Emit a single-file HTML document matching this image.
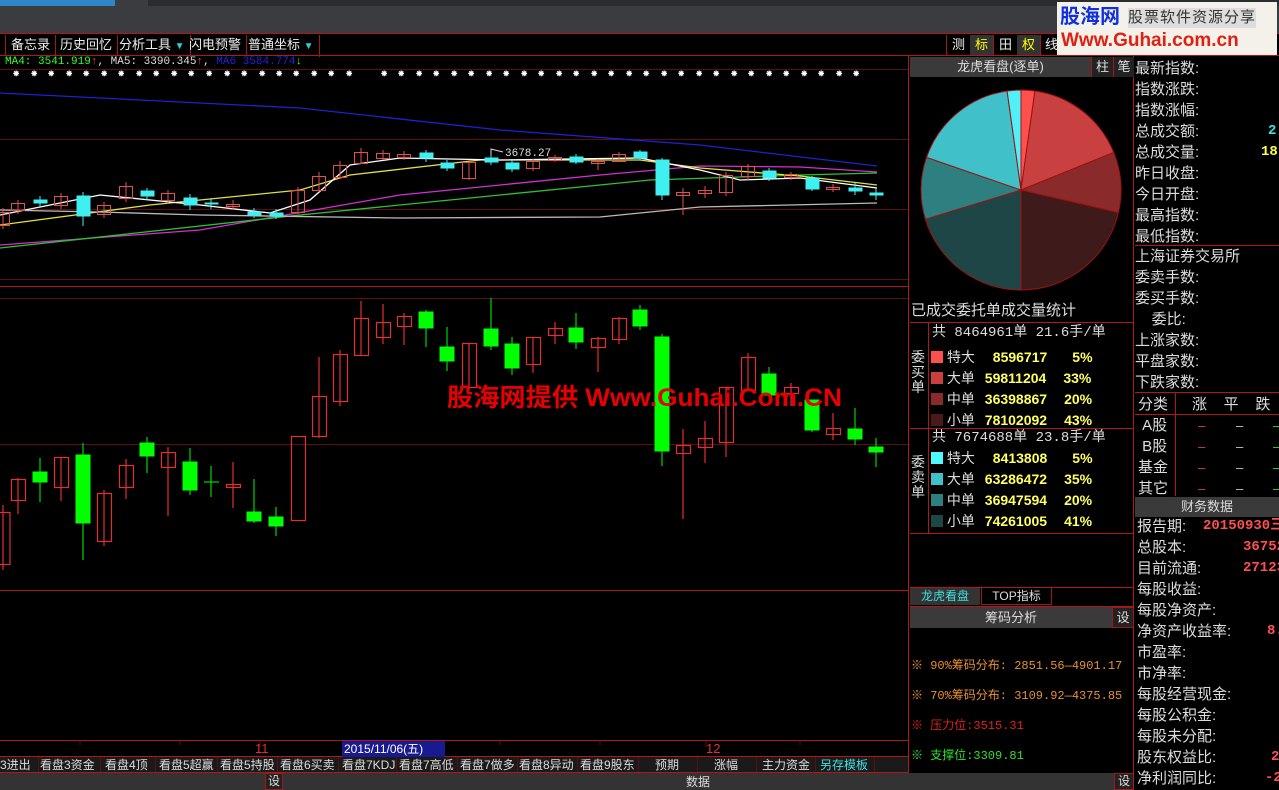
<!DOCTYPE html>
<html><head><meta charset="utf-8"><style>
*{margin:0;padding:0;box-sizing:border-box}
body{width:1279px;height:790px;background:#000;position:relative;overflow:hidden;font-family:"Liberation Sans","Noto Sans CJK SC",sans-serif;color:#ddd}
.a{position:absolute;white-space:nowrap}
.r{font-size:15px;color:#ddd;line-height:18px}
.tb{font-size:13px;color:#eee;line-height:20px;top:35px;border-right:1px solid #a01818;padding:0 5px}
.bt{font-size:12px;color:#ddd;top:757px;line-height:16px}
.m{font-family:"Liberation Mono","Noto Sans CJK SC",monospace}
</style></head><body>
<div class="a" style="left:0;top:0;width:1279px;height:33px;background:#3a3c40"></div>
<div class="a" style="left:0;top:0;width:115px;height:6px;background:#2e86c8"></div>
<div class="a" style="left:148px;top:0;width:1131px;height:6px;background:#2a2c30"></div>
<div class="a" style="left:0;top:33px;width:1279px;height:1px;background:#b01818"></div>
<div class="a" style="left:0;top:55px;width:1279px;height:1px;background:#b01818"></div>
<div class="a" style="left:5px;top:35px;height:20px;border-left:1px solid #a01818"></div>
<div class="a tb" style="left:6px">备忘录</div>
<div class="a tb" style="left:55px">历史回忆</div>
<div class="a tb" style="left:114px">分析工具 <span style="color:#30d0d0;font-size:10px">▼</span></div>
<div class="a tb" style="left:184px">闪电预警</div>
<div class="a tb" style="left:243px">普通坐标 <span style="color:#30d0d0;font-size:10px">▼</span></div>
<div class="a" style="left:946px;top:35px;height:20px;border-left:1px solid #a01818"></div>
<div class="a tb" style="left:947px">测</div>
<div class="a tb" style="left:970px;background:#333;color:#ff0">标</div>
<div class="a tb" style="left:994px">田</div>
<div class="a tb" style="left:1017px;background:#333;color:#ff0">权</div>
<div class="a tb" style="left:1040px">线</div>
<div class="a" style="left:1057px;top:2px;width:220px;height:53px;background:#f4f1ea"></div>
<div class="a" style="left:1060px;top:5px;font-size:20px;font-weight:bold;color:#1030e0;line-height:24px">股海网</div>
<div class="a" style="left:1128px;top:8px;font-size:15px;color:#333;line-height:20px;background:#ddd;letter-spacing:1px">股票软件资源分享</div>
<div class="a" style="left:1061px;top:30px;font-size:19px;font-weight:bold;color:#e02010;line-height:22px">Www.Guhai.com.cn</div>
<div class="a m" style="left:5px;top:56px;font-size:11px;line-height:13px"><span style="color:#30ff30">MA4: 3541.919</span><span style="color:#ff4040">↑</span><span style="color:#ddd">, MA5: 3390.345</span><span style="color:#ff4040">↑</span><span style="color:#ddd">, </span><span style="color:#2020e0">MA6  3584.774</span><span style="color:#30ff30">↓</span></div>
<svg class="a" style="left:0;top:0" width="909" height="773">
<g stroke="#5a1010" stroke-width="1">
<line x1="0" y1="69.5" x2="908" y2="69.5"/><line x1="0" y1="139.5" x2="908" y2="139.5"/><line x1="0" y1="209.5" x2="908" y2="209.5"/><line x1="0" y1="279.5" x2="908" y2="279.5"/>
<line x1="0" y1="298.5" x2="908" y2="298.5"/><line x1="0" y1="444.5" x2="908" y2="444.5"/>
</g>
<g stroke="#b01818"><line x1="0" y1="286.5" x2="908" y2="286.5"/><line x1="0" y1="590.5" x2="908" y2="590.5"/><line x1="0" y1="740.5" x2="908" y2="740.5"/><line x1="908.5" y1="56" x2="908.5" y2="773"/><line x1="0" y1="756.5" x2="908" y2="756.5"/><line x1="0" y1="772.5" x2="908" y2="772.5"/></g>
<g stroke="#5a1010"><line x1="260" y1="741" x2="260" y2="747"/><line x1="706" y1="741" x2="706" y2="747"/><line x1="80" y1="741" x2="80" y2="745"/><line x1="180" y1="741" x2="180" y2="745"/><line x1="500" y1="741" x2="500" y2="745"/><line x1="600" y1="741" x2="600" y2="745"/><line x1="800" y1="741" x2="800" y2="745"/></g>
<g stroke="#5a1010"><line x1="38.5" y1="757" x2="38.5" y2="772"/><line x1="100.5" y1="757" x2="100.5" y2="772"/><line x1="155.5" y1="757" x2="155.5" y2="772"/><line x1="217.5" y1="757" x2="217.5" y2="772"/><line x1="277.5" y1="757" x2="277.5" y2="772"/><line x1="338.5" y1="757" x2="338.5" y2="772"/><line x1="396.5" y1="757" x2="396.5" y2="772"/><line x1="457.5" y1="757" x2="457.5" y2="772"/><line x1="517.5" y1="757" x2="517.5" y2="772"/><line x1="577.5" y1="757" x2="577.5" y2="772"/><line x1="638.5" y1="757" x2="638.5" y2="772"/><line x1="697.5" y1="757" x2="697.5" y2="772"/><line x1="756.5" y1="757" x2="756.5" y2="772"/><line x1="815.5" y1="757" x2="815.5" y2="772"/><line x1="874.5" y1="757" x2="874.5" y2="772"/></g>
<g fill="#fff" font-size="10" font-family="Liberation Sans" font-weight="bold">
<text x="12" y="77">⁕</text><text x="30" y="77">⁕</text><text x="47" y="77">⁕</text><text x="65" y="77">⁕</text><text x="82" y="77">⁕</text><text x="100" y="77">⁕</text><text x="117" y="77">⁕</text><text x="135" y="77">⁕</text><text x="152" y="77">⁕</text><text x="170" y="77">⁕</text><text x="187" y="77">⁕</text><text x="205" y="77">⁕</text><text x="223" y="77">⁕</text><text x="240" y="77">⁕</text><text x="258" y="77">⁕</text><text x="275" y="77">⁕</text><text x="292" y="77">⁕</text><text x="310" y="77">⁕</text><text x="327" y="77">⁕</text><text x="345" y="77">⁕</text><text x="380" y="77">⁕</text><text x="397" y="77">⁕</text><text x="415" y="77">⁕</text><text x="432" y="77">⁕</text><text x="450" y="77">⁕</text><text x="467" y="77">⁕</text><text x="485" y="77">⁕</text><text x="502" y="77">⁕</text><text x="520" y="77">⁕</text><text x="537" y="77">⁕</text><text x="555" y="77">⁕</text><text x="572" y="77">⁕</text><text x="590" y="77">⁕</text><text x="607" y="77">⁕</text><text x="625" y="77">⁕</text><text x="642" y="77">⁕</text><text x="660" y="77">⁕</text><text x="677" y="77">⁕</text><text x="695" y="77">⁕</text><text x="712" y="77">⁕</text><text x="730" y="77">⁕</text><text x="747" y="77">⁕</text><text x="765" y="77">⁕</text><text x="782" y="77">⁕</text><text x="800" y="77">⁕</text><text x="817" y="77">⁕</text><text x="835" y="77">⁕</text><text x="852" y="77">⁕</text>
</g>
<g fill="none" stroke-width="1.3">
<polyline stroke="#2020d0" points="0,93 300,108 500,130 700,145 877,166"/>
<polyline stroke="#d030d0" points="0,245 200,230 400,195 600,175 700,166 800,167 877,172"/>
<polyline stroke="#30c030" points="0,248 300,215 500,195 650,180 800,175 877,173"/>
<polyline stroke="#e0e040" points="0,225 150,205 300,190 350,175 480,160 640,160 700,168 800,176 877,185"/>
<polyline stroke="#ffffff" points="0,215 100,195 200,205 270,213 310,200 350,165 400,158 500,160 640,158 700,170 740,180 800,178 877,188"/>
<polyline stroke="#bbbbbb" points="0,210 100,212 200,215 400,218 600,217 700,207 877,203"/>
</g>
<text x="505" y="156" fill="#ddd" font-size="11" font-family="Liberation Mono">3678.27</text>
<polyline points="491,158 491,149 503,152" fill="none" stroke="#ddd"/>
<g stroke="#e05050" fill="none">
<line x1="3" y1="208" x2="3" y2="229"/><rect x="-3.5" y="212.5" width="13" height="13"/>
<line x1="18" y1="200" x2="18" y2="214"/><rect x="11.5" y="203.5" width="13" height="7"/>
<line x1="61" y1="193" x2="61" y2="209"/><rect x="54.5" y="196.5" width="13" height="9"/>
<line x1="104" y1="202" x2="104" y2="218"/><rect x="97.5" y="205.5" width="13" height="9"/>
<line x1="126" y1="182" x2="126" y2="202"/><rect x="119.5" y="186.5" width="13" height="12"/>
<line x1="168" y1="190" x2="168" y2="204"/><rect x="161.5" y="193.5" width="13" height="7"/>
<line x1="233" y1="200" x2="233" y2="210"/><rect x="226.5" y="204.5" width="13" height="2"/>
<line x1="298" y1="187" x2="298" y2="214"/><rect x="291.5" y="190.5" width="13" height="22"/>
<line x1="319" y1="172" x2="319" y2="192"/><rect x="312.5" y="176.5" width="13" height="14"/>
<line x1="340" y1="161" x2="340" y2="179"/><rect x="333.5" y="165.5" width="13" height="12"/>
<line x1="361" y1="148" x2="361" y2="164"/><rect x="354.5" y="152.5" width="13" height="11"/>
<line x1="383" y1="150" x2="383" y2="160"/><rect x="376.5" y="153.5" width="13" height="5"/>
<line x1="404" y1="151" x2="404" y2="160"/><rect x="397.5" y="154.5" width="13" height="3"/>
<line x1="469" y1="160" x2="469" y2="180"/><rect x="462.5" y="162.5" width="13" height="16"/>
<line x1="533" y1="159" x2="533" y2="171"/><rect x="526.5" y="161.5" width="13" height="7"/>
<line x1="555" y1="155" x2="555" y2="162"/><rect x="548.5" y="157.5" width="13" height="3"/>
<line x1="598" y1="159" x2="598" y2="170"/><rect x="591.5" y="161.5" width="13" height="2"/>
<line x1="619" y1="152" x2="619" y2="162"/><rect x="612.5" y="154.5" width="13" height="7"/>
<line x1="683" y1="188" x2="683" y2="215"/><rect x="676.5" y="192.5" width="13" height="3"/>
<line x1="705" y1="186" x2="705" y2="198"/><rect x="698.5" y="190.5" width="13" height="3"/>
<line x1="726" y1="172" x2="726" y2="196"/><rect x="719.5" y="175.5" width="13" height="17"/>
<line x1="748" y1="164" x2="748" y2="180"/><rect x="741.5" y="166.5" width="13" height="10"/>
<line x1="791" y1="172" x2="791" y2="180"/><rect x="784.5" y="174.5" width="13" height="3"/>
<line x1="833" y1="184" x2="833" y2="192"/><rect x="826.5" y="187.5" width="13" height="2"/>
</g>
<g stroke="#40f0f0" fill="#40f0f0">
<line x1="40" y1="196" x2="40" y2="207"/><rect x="34" y="200" width="13" height="3"/>
<line x1="83" y1="192" x2="83" y2="226"/><rect x="77" y="196" width="13" height="20"/>
<line x1="147" y1="188" x2="147" y2="200"/><rect x="141" y="191" width="13" height="5"/>
<line x1="190" y1="194" x2="190" y2="210"/><rect x="184" y="198" width="13" height="7"/>
<line x1="211" y1="198" x2="211" y2="209"/><rect x="205" y="203" width="13" height="1"/>
<line x1="254" y1="208" x2="254" y2="218"/><rect x="248" y="212" width="13" height="3"/>
<line x1="276" y1="209" x2="276" y2="219"/><rect x="270" y="213" width="13" height="3"/>
<line x1="426" y1="150" x2="426" y2="162"/><rect x="420" y="153" width="13" height="5"/>
<line x1="447" y1="160" x2="447" y2="171"/><rect x="441" y="163" width="13" height="5"/>
<line x1="491" y1="155" x2="491" y2="165"/><rect x="485" y="158" width="13" height="4"/>
<line x1="512" y1="160" x2="512" y2="172"/><rect x="506" y="163" width="13" height="6"/>
<line x1="576" y1="154" x2="576" y2="164"/><rect x="570" y="157" width="13" height="5"/>
<line x1="640" y1="150" x2="640" y2="160"/><rect x="634" y="152" width="13" height="6"/>
<line x1="662" y1="158" x2="662" y2="200"/><rect x="656" y="160" width="13" height="35"/>
<line x1="769" y1="168" x2="769" y2="181"/><rect x="763" y="171" width="13" height="7"/>
<line x1="812" y1="176" x2="812" y2="191"/><rect x="806" y="178" width="13" height="11"/>
<line x1="855" y1="183" x2="855" y2="195"/><rect x="849" y="188" width="13" height="3"/>
<line x1="876" y1="188" x2="876" y2="200"/><rect x="870" y="193" width="13" height="2"/>
</g>
<g stroke="#e03030" fill="none" stroke-width="1.2">
<line x1="3" y1="505" x2="3" y2="570"/><rect x="-4" y="512.5" width="14" height="52"/>
<line x1="18" y1="478" x2="18" y2="514"/><rect x="11.5" y="479.5" width="14" height="21"/>
<line x1="61" y1="457" x2="61" y2="501"/><rect x="54.5" y="457.5" width="14" height="30"/>
<line x1="104" y1="490" x2="104" y2="546"/><rect x="97.5" y="493.5" width="14" height="48"/>
<line x1="126" y1="459" x2="126" y2="499"/><rect x="119.5" y="465.5" width="14" height="22"/>
<line x1="168" y1="447" x2="168" y2="516"/><rect x="161.5" y="452.5" width="14" height="15"/>
<line x1="233" y1="462" x2="233" y2="508"/><rect x="226.5" y="484.5" width="14" height="3"/>
<rect x="291.5" y="436.5" width="14" height="84"/>
<line x1="319" y1="357" x2="319" y2="438"/><rect x="312.5" y="396.5" width="14" height="40"/>
<line x1="340" y1="350" x2="340" y2="406"/><rect x="333.5" y="354.5" width="14" height="47"/>
<line x1="361" y1="301" x2="361" y2="355"/><rect x="354.5" y="318.5" width="14" height="37"/>
<line x1="383" y1="304" x2="383" y2="344"/><rect x="376.5" y="322.5" width="14" height="15"/>
<line x1="404" y1="313" x2="404" y2="345"/><rect x="397.5" y="316.5" width="14" height="10"/>
<line x1="469" y1="343" x2="469" y2="390"/><rect x="462.5" y="343.5" width="14" height="44"/>
<line x1="533" y1="337" x2="533" y2="373"/><rect x="526.5" y="337.5" width="14" height="27"/>
<line x1="555" y1="322" x2="555" y2="344"/><rect x="548.5" y="328.5" width="14" height="7"/>
<line x1="598" y1="337" x2="598" y2="372"/><rect x="591.5" y="338.5" width="14" height="9"/>
<line x1="619" y1="317" x2="619" y2="344"/><rect x="612.5" y="318.5" width="14" height="21"/>
<line x1="683" y1="429" x2="683" y2="519"/><rect x="676.5" y="445.5" width="14" height="8"/>
<line x1="705" y1="421" x2="705" y2="463"/><rect x="698.5" y="438.5" width="14" height="9"/>
<line x1="726" y1="387" x2="726" y2="457"/><rect x="719.5" y="387.5" width="14" height="55"/>
<line x1="748" y1="353" x2="748" y2="390"/><rect x="741.5" y="357.5" width="14" height="33"/>
<line x1="791" y1="383" x2="791" y2="406"/><rect x="784.5" y="387.5" width="14" height="6"/>
<line x1="833" y1="413" x2="833" y2="440"/><rect x="826.5" y="428.5" width="14" height="6"/>
</g>
<g stroke="#00ff00" fill="#00ff00">
<line x1="40" y1="458" x2="40" y2="502"/><rect x="33" y="472" width="14" height="10"/>
<line x1="83" y1="443" x2="83" y2="560"/><rect x="76" y="455" width="14" height="68"/>
<line x1="147" y1="437" x2="147" y2="473"/><rect x="140" y="443" width="14" height="13"/>
<line x1="190" y1="448" x2="190" y2="495"/><rect x="183" y="462" width="14" height="28"/>
<line x1="211" y1="466" x2="211" y2="497"/><line x1="204" y1="482" x2="219" y2="482"/>
<line x1="254" y1="479" x2="254" y2="523"/><rect x="247" y="512" width="14" height="9"/>
<line x1="276" y1="507" x2="276" y2="536"/><rect x="269" y="517" width="14" height="9"/>
<line x1="426" y1="310" x2="426" y2="347"/><rect x="419" y="312" width="14" height="16"/>
<line x1="447" y1="327" x2="447" y2="371"/><rect x="440" y="347" width="14" height="14"/>
<line x1="491" y1="298" x2="491" y2="350"/><rect x="484" y="329" width="14" height="17"/>
<line x1="512" y1="337" x2="512" y2="375"/><rect x="505" y="344" width="14" height="24"/>
<line x1="576" y1="313" x2="576" y2="349"/><rect x="569" y="328" width="14" height="14"/>
<line x1="640" y1="305" x2="640" y2="330"/><rect x="633" y="310" width="14" height="16"/>
<line x1="662" y1="334" x2="662" y2="466"/><rect x="655" y="337" width="14" height="114"/>
<line x1="769" y1="367" x2="769" y2="395"/><rect x="762" y="374" width="14" height="21"/>
<line x1="812" y1="400" x2="812" y2="432"/><rect x="805" y="400" width="14" height="30"/>
<line x1="855" y1="408" x2="855" y2="445"/><rect x="848" y="429" width="14" height="10"/>
<line x1="876" y1="438" x2="876" y2="467"/><rect x="869" y="447" width="14" height="5"/>
</g>
<text x="447" y="406" fill="#e80000" font-size="25" font-weight="bold" textLength="395" lengthAdjust="spacingAndGlyphs" font-family="Liberation Sans,Noto Sans CJK SC,sans-serif">股海网提供 Www.Guhai.Com.CN</text>
<text x="255" y="753" fill="#e03030" font-size="13" font-family="Liberation Sans">11</text>
<rect x="342" y="741" width="103" height="16" fill="#1a1a90"/>
<text x="344" y="753" fill="#fff" font-size="12" font-family="Liberation Sans,Noto Sans CJK SC">2015/11/06(五)</text>
<text x="706" y="753" fill="#e03030" font-size="13" font-family="Liberation Sans">12</text>
</svg>
<div class="a" style="left:0;top:757px;width:908px;height:16px;background:#1a1a1a;z-index:-1"></div>
<div class="a bt" style="left:0">3进出</div>
<div class="a bt" style="left:40px">看盘3资金</div>
<div class="a bt" style="left:105px">看盘4顶</div>
<div class="a bt" style="left:159px">看盘5超赢</div>
<div class="a bt" style="left:220px">看盘5持股</div>
<div class="a bt" style="left:280px">看盘6买卖</div>
<div class="a bt" style="left:342px">看盘7KDJ</div>
<div class="a bt" style="left:399px">看盘7高低</div>
<div class="a bt" style="left:460px">看盘7做多</div>
<div class="a bt" style="left:519px">看盘8异动</div>
<div class="a bt" style="left:580px">看盘9股东</div>
<div class="a bt" style="left:655px">预期</div>
<div class="a bt" style="left:714px">涨幅</div>
<div class="a bt" style="left:762px">主力资金</div>
<div class="a bt" style="left:820px;color:#40e0e0">另存模板</div>
<div class="a" style="left:0;top:773px;width:1134px;height:17px;background:#333"></div>
<div class="a" style="left:265px;top:773px;width:18px;height:17px;border:1px solid #a01818;background:#222;font-size:12px;text-align:center;line-height:15px">设</div>
<div class="a" style="left:686px;top:774px;font-size:12px;line-height:16px">数据</div>
<div class="a" style="left:1114px;top:773px;width:20px;height:17px;border:1px solid #a01818;background:#222;font-size:12px;text-align:center;line-height:15px">设</div>
<div class="a" style="left:909px;top:56px;width:225px;height:734px;border-right:1px solid #b01818"></div>
<div class="a" style="left:910px;top:57px;width:181px;height:20px;background:#3a3a3a;font-size:13px;text-align:center;line-height:20px;color:#ddd">龙虎看盘(逐单)</div>
<div class="a" style="left:1091px;top:57px;width:22px;height:20px;background:#222;border-left:1px solid #a01818;font-size:13px;text-align:center;line-height:20px">柱</div>
<div class="a" style="left:1113px;top:57px;width:21px;height:20px;background:#222;border-left:1px solid #a01818;font-size:13px;text-align:center;line-height:20px">笔</div>
<svg class="a" style="left:909px;top:77px" width="225" height="230">
<g stroke="#a01010" stroke-width="1" transform="translate(112,113)">
<path d="M0,0 L0,-100 A100,100 0 0 1 13.9,-99 Z" fill="#ff5050"/>
<path d="M0,0 L13.9,-99 A100,100 0 0 1 92.7,-37.5 Z" fill="#c84040"/>
<path d="M0,0 L92.7,-37.5 A100,100 0 0 1 97.4,22.5 Z" fill="#8a2a2a"/>
<path d="M0,0 L97.4,22.5 A100,100 0 0 1 0,100 Z" fill="#3e1a1a"/>
<path d="M0,0 L0,100 A100,100 0 0 1 -95.6,29.2 Z" fill="#1e4646"/>
<path d="M0,0 L-95.6,29.2 A100,100 0 0 1 -94.5,-32.6 Z" fill="#2e8080"/>
<path d="M0,0 L-94.5,-32.6 A100,100 0 0 1 -13.9,-99 Z" fill="#40c0c8"/>
<path d="M0,0 L-13.9,-99 A100,100 0 0 1 0,-100 Z" fill="#50f0f8"/>
</g></svg>
<div class="a" style="left:911px;top:302px;font-size:15px;line-height:18px">已成交委托单成交量统计</div>
<div class="a" style="left:910px;top:322px;width:224px;height:1px;background:#b01818"></div>
<div class="a" style="left:910px;top:428px;width:224px;height:1px;background:#b01818"></div>
<div class="a" style="left:910px;top:533px;width:224px;height:1px;background:#b01818"></div>
<div class="a" style="left:928px;top:322px;width:1px;height:211px;background:#b01818"></div>
<div class="a" style="left:911px;top:350px;font-size:14px;line-height:15px;width:15px;white-space:normal">委买单</div>
<div class="a" style="left:911px;top:455px;font-size:14px;line-height:15px;width:15px;white-space:normal">委卖单</div>
<div class="a m" style="left:932px;top:325px;font-size:14px;line-height:16px">共 8464961单 21.6手/单</div>
<div class="a m" style="left:932px;top:430px;font-size:14px;line-height:16px">共 7674688单 23.8手/单</div>
<div class="a" style="left:931px;top:347px;font-size:14px;line-height:21px">
<div><span style="display:inline-block;width:12px;height:12px;background:#ff5050;vertical-align:-1px"></span> 特大 <b style="color:#ffff60;margin-left:14px">8596717</b><b style="color:#ffff60;margin-left:25px">5%</b></div>
<div><span style="display:inline-block;width:12px;height:12px;background:#c84040;vertical-align:-1px"></span> 大单 <b style="color:#ffff60;margin-left:6px">59811204</b><b style="color:#ffff60;margin-left:17px">33%</b></div>
<div><span style="display:inline-block;width:12px;height:12px;background:#8a2a2a;vertical-align:-1px"></span> 中单 <b style="color:#ffff60;margin-left:6px">36398867</b><b style="color:#ffff60;margin-left:17px">20%</b></div>
<div><span style="display:inline-block;width:12px;height:12px;background:#4a1a1a;vertical-align:-1px"></span> 小单 <b style="color:#ffff60;margin-left:6px">78102092</b><b style="color:#ffff60;margin-left:17px">43%</b></div>
</div>
<div class="a" style="left:931px;top:448px;font-size:14px;line-height:21px">
<div><span style="display:inline-block;width:12px;height:12px;background:#50f8ff;vertical-align:-1px"></span> 特大 <b style="color:#ffff60;margin-left:14px">8413808</b><b style="color:#ffff60;margin-left:25px">5%</b></div>
<div><span style="display:inline-block;width:12px;height:12px;background:#40c0c8;vertical-align:-1px"></span> 大单 <b style="color:#ffff60;margin-left:6px">63286472</b><b style="color:#ffff60;margin-left:17px">35%</b></div>
<div><span style="display:inline-block;width:12px;height:12px;background:#2e8080;vertical-align:-1px"></span> 中单 <b style="color:#ffff60;margin-left:6px">36947594</b><b style="color:#ffff60;margin-left:17px">20%</b></div>
<div><span style="display:inline-block;width:12px;height:12px;background:#1e4646;vertical-align:-1px"></span> 小单 <b style="color:#ffff60;margin-left:6px">74261005</b><b style="color:#ffff60;margin-left:17px">41%</b></div>
</div>
<div class="a" style="left:910px;top:587px;width:224px;height:1px;background:#b01818"></div>
<div class="a" style="left:910px;top:588px;width:70px;height:17px;background:#333;color:#40e0e0;font-size:12px;text-align:center;line-height:17px">龙虎看盘</div>
<div class="a" style="left:981px;top:588px;width:71px;height:17px;border:1px solid #a01818;border-top:none;font-size:12px;text-align:center;line-height:16px">TOP指标</div>
<div class="a" style="left:910px;top:606px;width:224px;height:1px;background:#b01818"></div>
<div class="a" style="left:910px;top:607px;width:202px;height:21px;background:#3a3a3a;font-size:13px;text-align:center;line-height:21px">筹码分析</div>
<div class="a" style="left:1112px;top:607px;width:22px;height:21px;border:1px solid #a01818;background:#222;font-size:13px;text-align:center;line-height:19px">设</div>
<div class="a m" style="left:911px;top:659px;font-size:12px;color:#e89030;line-height:14px">※ 90%筹码分布: 2851.56—4901.17</div>
<div class="a m" style="left:911px;top:689px;font-size:12px;color:#e89030;line-height:14px">※ 70%筹码分布: 3109.92—4375.85</div>
<div class="a m" style="left:911px;top:719px;font-size:12px;color:#e02020;line-height:14px">※ 压力位:3515.31</div>
<div class="a m" style="left:911px;top:749px;font-size:12px;color:#30e030;line-height:14px">※ 支撑位:3309.81</div>
<div class="a r" style="left:1135px;top:58px;line-height:21px">最新指数:<br>指数涨跌:<br>指数涨幅:<br>总成交额:<br>总成交量:<br>昨日收盘:<br>今日开盘:<br>最高指数:<br>最低指数:</div>
<div class="a m" style="left:1268px;top:121px;font-size:14px;color:#40e0e0;font-weight:bold;line-height:21px">2</div>
<div class="a m" style="left:1261px;top:142px;font-size:14px;color:#ffff40;font-weight:bold;line-height:21px">18</div>
<div class="a" style="left:1135px;top:245px;width:144px;height:1px;background:#b01818"></div>
<div class="a r" style="left:1135px;top:246px;line-height:21px">上海证券交易所<br>委卖手数:<br>委买手数:<br>&nbsp;&nbsp;&nbsp;&nbsp;委比:<br>上涨家数:<br>平盘家数:<br>下跌家数:</div>
<div class="a" style="left:1135px;top:392px;width:144px;height:1px;background:#b01818"></div>
<div class="a" style="left:1135px;top:414px;width:144px;height:1px;background:#b01818"></div>
<div class="a" style="left:1175px;top:392px;width:1px;height:104px;background:#b01818"></div>
<div class="a r" style="left:1138px;top:394px;line-height:21px">分类<br>&nbsp;A股<br>&nbsp;B股<br>基金<br>其它</div>
<div class="a r" style="left:1192px;top:394px;line-height:21px">涨&nbsp;&nbsp;&nbsp;&nbsp;平&nbsp;&nbsp;&nbsp;&nbsp;跌</div>
<div class="a" style="left:1198px;top:415px;font-size:13px;line-height:21px;color:#e04040">–<br>–<br>–<br>–</div>
<div class="a" style="left:1236px;top:415px;font-size:13px;line-height:21px;color:#ccc">–<br>–<br>–<br>–</div>
<div class="a" style="left:1273px;top:415px;font-size:13px;line-height:21px;color:#30e030">–<br>–<br>–<br>–</div>
<div class="a" style="left:1135px;top:497px;width:144px;height:20px;background:#3a3a3a;font-size:13px;text-align:center;line-height:20px">财务数据</div>
<div class="a r" style="left:1137px;top:516px;line-height:21px">报告期:<br>总股本:<br>目前流通:<br>每股收益:<br>每股净资产:<br>净资产收益率:<br>市盈率:<br>市净率:<br>每股经营现金:<br>每股公积金:<br>每股未分配:<br>股东权益比:<br>净利润同比:</div>
<div class="a m" style="left:1203px;top:516px;font-size:14px;color:#ff5050;font-weight:bold;line-height:21px">20150930三</div>
<div class="a m" style="left:1243px;top:537px;font-size:14px;color:#ff5050;font-weight:bold;line-height:21px">36752</div>
<div class="a m" style="left:1243px;top:558px;font-size:14px;color:#ff5050;font-weight:bold;line-height:21px">27123</div>
<div class="a m" style="left:1267px;top:621px;font-size:14px;color:#ff5050;font-weight:bold;line-height:21px">8.</div>
<div class="a m" style="left:1271px;top:747px;font-size:14px;color:#ff5050;font-weight:bold;line-height:21px">2</div>
<div class="a m" style="left:1265px;top:768px;font-size:14px;color:#ff5050;font-weight:bold;line-height:21px">-2</div>
</body></html>
